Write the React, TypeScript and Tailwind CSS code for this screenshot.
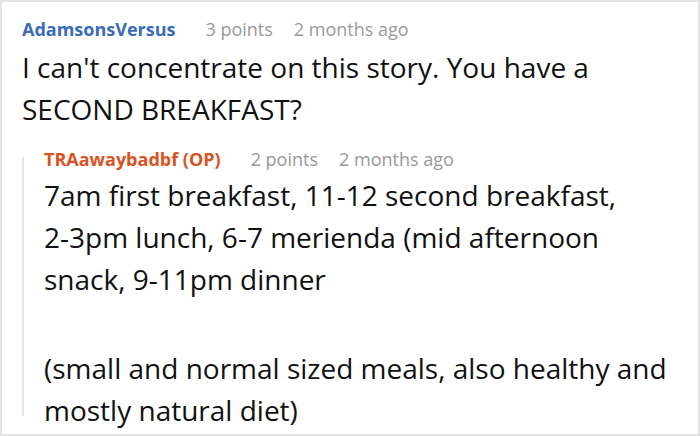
export default function App() {
    return (
        <div
            className="w-[700px] h-[436px] overflow-hidden border-2 border-[#e4e4e4] bg-white pl-[20px] pt-[15px] text-[#111]"
            style={{ fontFamily: '"Open Sans", "Noto Sans", sans-serif' }}
        >
            <div className="flex items-baseline text-[18px] leading-[24px]">
                <span className="font-bold text-[#3b6bbb]">AdamsonsVersus</span>
                <span className="ml-[30px] text-[#999]">3 points</span>
                <span className="ml-[21px] text-[#999]">2 months ago</span>
            </div>
            <p className="mt-[5px] text-[28px] leading-[42px]">
                I can't concentrate on this story. You have a
                <br />
                SECOND BREAKFAST?
            </p>

            <div className="mt-[17px] flex">
                <div className="mt-[10px] mb-[15px] w-[2px] bg-[#e6e6e6]" />
                <div className="pl-[20px]">
                    <div className="flex items-baseline text-[18px] leading-[24px]">
                        <span className="font-bold text-[#d9531f]">TRAawaybadbf (OP)</span>
                        <span className="ml-[30px] text-[#999]">2 points</span>
                        <span className="ml-[21px] text-[#999]">2 months ago</span>
                    </div>
                    <p className="mt-[3px] text-[28px] leading-[42px]">
                        7am first breakfast, 11-12 second breakfast,
                        <br />
                        2-3pm lunch, 6-7 merienda (mid afternoon
                        <br />
                        snack, 9-11pm dinner
                    </p>
                    <p className="mt-[47px] text-[28px] leading-[42px]">
                        (small and normal sized meals, also healthy and
                        <br />
                        mostly natural diet)
                    </p>
                </div>
            </div>
        </div>
    );
}
